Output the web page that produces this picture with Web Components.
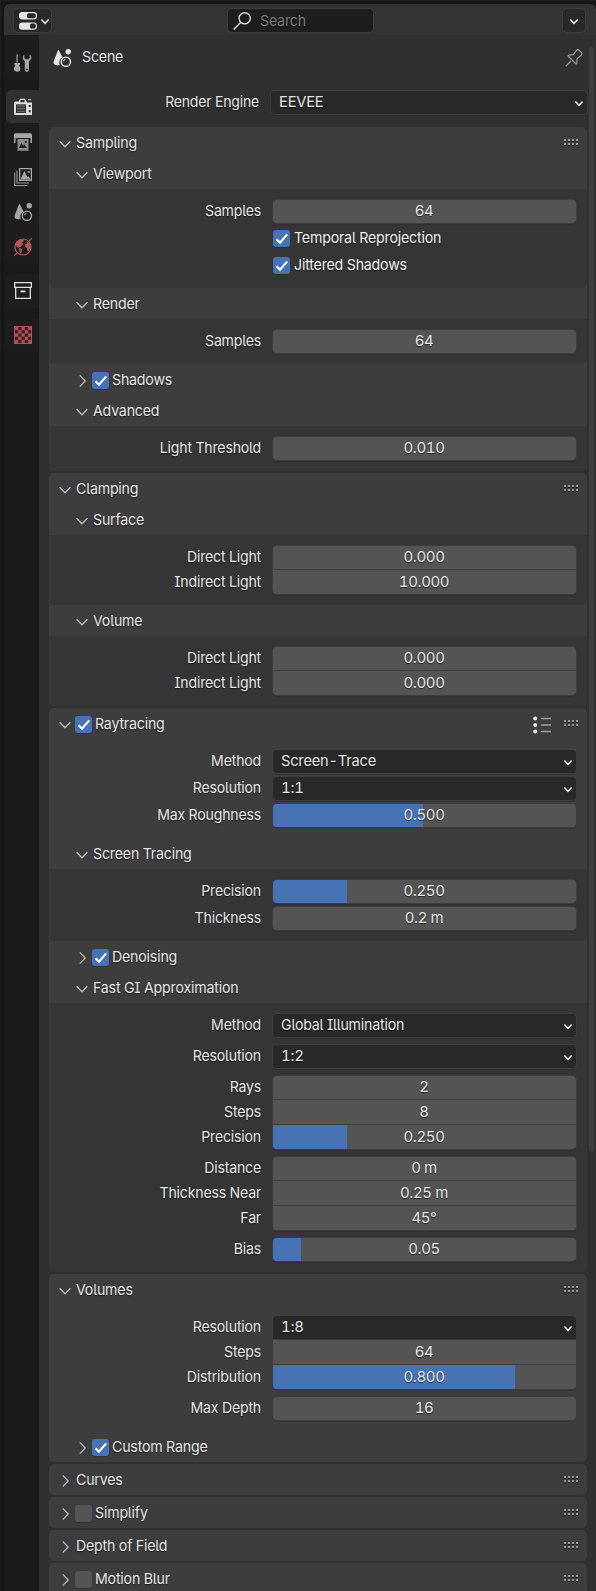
<!DOCTYPE html>
<html lang="en">
<head>
<meta charset="utf-8">
<title>Render Properties</title>
<style>
html,body{margin:0;height:1591px;overflow:hidden;background:#161616}
body{font:15px/23px Inter,"Liberation Sans",sans-serif;color:#e6e6e6;
 font-feature-settings:"cv05","cv08","tnum";text-shadow:0 1px 1px rgba(0,0,0,.6);letter-spacing:-.2px;white-space:nowrap}
</style>
</head>
<body>
<prop-editor>
  <panel-box heading="Sampling">
    <sub-panel heading="Viewport">
      <prop-row label="Samples"><num-field value="64"></num-field></prop-row>
      <prop-row><check-box checked label="Temporal Reprojection"></check-box></prop-row>
      <prop-row><check-box checked label="Jittered Shadows"></check-box></prop-row>
    </sub-panel>
    <sub-panel heading="Render">
      <prop-row label="Samples"><num-field value="64"></num-field></prop-row>
    </sub-panel>
    <sub-panel heading="Shadows" closed check="on"></sub-panel>
    <sub-panel heading="Advanced">
      <prop-row label="Light Threshold"><num-field value="0.010"></num-field></prop-row>
    </sub-panel>
  </panel-box>
  <panel-box heading="Clamping">
    <sub-panel heading="Surface">
      <prop-group>
        <prop-row label="Direct Light"><num-field value="0.000"></num-field></prop-row>
        <prop-row label="Indirect Light"><num-field value="10.000"></num-field></prop-row>
      </prop-group>
    </sub-panel>
    <sub-panel heading="Volume">
      <prop-group>
        <prop-row label="Direct Light"><num-field value="0.000"></num-field></prop-row>
        <prop-row label="Indirect Light"><num-field value="0.000"></num-field></prop-row>
      </prop-group>
    </sub-panel>
  </panel-box>
  <panel-box heading="Raytracing" check="on" presets>
    <prop-list>
      <prop-row label="Method"><drop-field value="Screen-Trace" style="--sx:.975"></drop-field></prop-row>
      <prop-row label="Resolution"><drop-field value="1:1" style="--sx:1"></drop-field></prop-row>
      <prop-row label="Max Roughness"><num-field value="0.500" fill="150"></num-field></prop-row>
    </prop-list>
    <sub-panel heading="Screen Tracing">
      <prop-row label="Precision"><num-field value="0.250" fill="74"></num-field></prop-row>
      <prop-row label="Thickness"><num-field value="0.2 m"></num-field></prop-row>
    </sub-panel>
    <sub-panel heading="Denoising" closed check="on"></sub-panel>
    <sub-panel heading="Fast GI Approximation" loose>
      <prop-row label="Method"><drop-field value="Global Illumination"></drop-field></prop-row>
      <prop-row label="Resolution"><drop-field value="1:2" style="--sx:1"></drop-field></prop-row>
      <prop-group>
        <prop-row label="Rays"><num-field value="2"></num-field></prop-row>
        <prop-row label="Steps"><num-field value="8"></num-field></prop-row>
        <prop-row label="Precision"><num-field value="0.250" fill="74"></num-field></prop-row>
      </prop-group>
      <prop-group>
        <prop-row label="Distance"><num-field value="0 m"></num-field></prop-row>
        <prop-row label="Thickness Near"><num-field value="0.25 m"></num-field></prop-row>
        <prop-row label="Far"><num-field value="45°"></num-field></prop-row>
      </prop-group>
      <prop-row label="Bias"><num-field value="0.05" fill="28"></num-field></prop-row>
    </sub-panel>
  </panel-box>
  <panel-box heading="Volumes">
    <prop-list loose>
      <prop-group>
        <prop-row label="Resolution"><drop-field value="1:8" style="--sx:1"></drop-field></prop-row>
        <prop-row label="Steps"><num-field value="64"></num-field></prop-row>
        <prop-row label="Distribution"><num-field value="0.800" fill="242"></num-field></prop-row>
      </prop-group>
      <prop-row label="Max Depth"><num-field value="16"></num-field></prop-row>
    </prop-list>
    <sub-panel heading="Custom Range" closed check="on"></sub-panel>
  </panel-box>
  <panel-box heading="Curves" closed></panel-box>
  <panel-box heading="Simplify" closed check="off"></panel-box>
  <panel-box heading="Depth of Field" closed></panel-box>
  <panel-box heading="Motion Blur" closed check="off"></panel-box>
</prop-editor>
<script>
const define = (name, css, html, init) => customElements.define(name, class extends HTMLElement {
  connectedCallback() {
    if (this.shadowRoot) return;
    const root = this.attachShadow({ mode: 'open' });
    root.innerHTML = `<style>*{box-sizing:border-box}${css}</style>` + html(this);
    if (init) init(this, root);
  }
});
const attr = (el, name) => el.getAttribute(name) || '';

const ICONS = {
  down: '<path d="M3.6 6.2 9 11.7l5.4-5.5" fill="none" stroke="#bdbdbd" stroke-width="1.3"/>',
  right: '<path d="M6.8 3.4 12.2 9l-5.4 5.6" fill="none" stroke="#bdbdbd" stroke-width="1.3"/>',
  drop: '<path d="M5.4 7.6 9 11.3l3.6-3.7" fill="none" stroke="#e6e6e6" stroke-width="1.5"/>',
  check: '<path d="M3.6 9.2 7 12.7 14.2 4.4" fill="none" stroke="#fff" stroke-width="2.1"/>',
  editor: '<rect x="0" y="0" width="18" height="7.4" rx="3.2" fill="#e6e6e6"/><rect x="8" y="1.2" width="8.6" height="5" rx="1.6" fill="#282828"/><rect x="0" y="10.4" width="18" height="7.4" rx="3.2" fill="#e6e6e6"/><rect x="11" y="11.6" width="5.7" height="5" rx="1.6" fill="#282828"/>',
  search: '<g fill="none" stroke="#dcdcdc" stroke-width="1.4"><circle cx="11.7" cy="6.3" r="5.6"/><path d="M7.6 10.4.6 17.4"/></g>',
  pin: '<path d="M.6 17.4 6 12M3 7l8 8 .9-.9V10l4.8-4.2.3-1.5L13.400.7l-1.3.2-3.900 4.8-4.300.4z" fill="none" stroke="#9a9a9a" stroke-width="1.2"/>',
  tool: '<g fill="#a6a6a6"><path d="M2.500.5h1.2v8H2.500z"/><path d="M.3 9h5.800v1.600L4.800 11.300c1.300 1 1.500 2.300 1.500 3.700 0 1.600-1 2.700-3 2.700S0 16.600 0 15c0-1.400.3-2.700 1.500-3.700L.3 10.600z"/><path d="M10.300.4c-2 1.500-2 5 .5 6.700v8.700a2 2 0 0 0 4.200 0V7.100c3-1.700 3-5.200.8-6.700v3.700l-1.300 1.200h-2.700L10.300 4.100z"/></g><circle cx="12.900" cy="15.500" r="1" fill="#222"/>',
  render: '<path d="M1.500 3.500h3.200L6 .7h5l1.300 2.800h.7v13.500H1.500A1.500 1.500 0 0 1 0 15.500V5a1.500 1.500 0 0 1 1.500-1.500z" fill="#e0e0e0"/><path d="M6.500 2h4v2.300h-4z" fill="#303030"/><path d="M12 4.500h6V17h-6z" fill="#e0e0e0"/><path d="M14 1h3.200v1.300H14z" fill="#aaa"/><path d="M2 6.300h10v8.700H2z" fill="#303030"/><path d="M2.800 8h8.400M2.800 10.600h8.400M2.800 13.300h8.400" stroke="#777" stroke-width="1"/><path d="M14.700 7h2v2h-2zM14.700 12.300h2v2h-2z" fill="#303030"/>',
  output: '<path d="M1.500.3h15A1.500 1.500 0 0 1 18 1.800V10h-1.500V5h-15v5H0V1.800A1.500 1.500 0 0 1 1.500.3z" fill="#a6a6a6"/><path fill-rule="evenodd" d="M3.500 6h11v11.700h-11zM5 15h8l-2.500-3.500-1.400 1.300L7.600 9.500z" fill="#8c8c8c"/><circle cx="11.700" cy="9" r="1.100" fill="#222"/>',
  layers: '<path d="M.7 4.500v13h12.500M3 2.600v12.400h12" fill="none" stroke="#999" stroke-width="1.100"/><path fill-rule="evenodd" d="M5 0h13v13H5zM6.300 1.300v10.400h10.400V1.300z" fill="#a6a6a6"/><path d="M6.500 11.500 10.300 3l3.300 6.300 1-1 2 3.200z" fill="#a6a6a6"/><path d="M13.500 3.200h2.200v1.600h-2.200z" fill="#a6a6a6"/>',
  scene: '<g fill="currentColor"><path d="M5.300.5 1 11.500C-.6 15.300 2 16.500 6.800 16.300 5.500 13 7 9.300 9.600 8.500z"/><circle cx="15.200" cy="2.800" r="2.700"/></g><circle cx="12.900" cy="12.700" r="4.600" fill="none" stroke="currentColor" stroke-width="1.400"/><path d="M10.500 12.300a2.300 2.300 0 0 1 2-2" fill="none" stroke="currentColor" stroke-width="1"/>',
  world: '<circle cx="9" cy="9" r="8" fill="none" stroke="#b8545c" stroke-width="1.200"/><path d="M1.500 5.500C4 1.500 8 .800 10 1.500l-.5 2-2 .8 1.800 1.200-2 3-2.300 1 3.300 2.200-1.300 4.300-1.500-2L5.200 10 2.800 9zM12 3.300l4 2.200 1 3.500-2 4-1.700-.5-.5-2.700-2-1.300.2-2 2-1z" fill="#b8545c"/><path d="M.3 17.700 3 15M15 3 17.700.3" stroke="#b8545c" stroke-width="1.200"/>',
  object: '<path d="M.7.700h16.600v4.600H.700zM1.700 5.300h14.600v11H1.700z" fill="none" stroke="#e0e0e0" stroke-width="1.300"/><path d="M6.500 8.500h5v1.800h-5z" fill="#e0e0e0"/>',
  texture: '<path d="M0 0h18v18H0z" fill="#b05058"/><path fill="#3a2022" d="M4.300 1h3.300v3.200H4.300zM10.800 1h3.300v3.200h-3.300zM1 4.300h3.300v3.300H1zM7.600 4.300h3.200v3.300H7.600zM14.100 4.300H17v3.300h-2.900zM4.300 7.600h3.300v3.200H4.300zM10.800 7.600h3.300v3.200h-3.300zM1 10.800h3.300v3.300H1zM7.600 10.800h3.200v3.300H7.600zM14.100 10.800H17v3.300h-2.900zM4.300 14.100h3.300V17H4.300zM10.800 14.100h3.300V17h-3.300z"/>',
  presets: '<g fill="#e6e6e6"><circle cx="2.200" cy="2.400" r="2"/><circle cx="2.200" cy="9" r="2"/><circle cx="2.200" cy="15.600" r="2"/></g><path d="M8 2.500h10M8 9h10M8 15.500h10" stroke="#a0a0a0" stroke-width="1.300"/>',
  grip: '<path d="M2 6h2v2H2zM6 6h2v2H6zM10 6h2v2h-2zM14 6h2v2h-2zM2 10h2v2H2zM6 10h2v2H6zM10 10h2v2h-2zM14 10h2v2h-2z" fill="#111"/><path d="M2 5h2v2H2zM6 5h2v2H6zM10 5h2v2h-2zM14 5h2v2h-2zM2 9h2v2H2zM6 9h2v2H6zM10 9h2v2h-2zM14 9h2v2h-2z" fill="#9c9c9c"/>'
};
define('ui-icon', ':host{display:block;width:18px;height:18px;flex:none}svg{display:block;overflow:visible}',
  el => `<svg width="18" height="18" viewBox="0 0 18 18">${ICONS[attr(el, 'name')]}</svg>`);

define('check-mark', `:host{display:block;flex:none;width:17px;height:17px;border-radius:3px;background:#545454;box-shadow:0 1px 0 rgba(0,0,0,.18)}
  :host([checked]){background:#4772b3}ui-icon{width:17px;height:17px}`,
  el => el.hasAttribute('checked') ? '<ui-icon name="check"></ui-icon>' : '');

define('check-box', ':host{display:flex;align-items:center;height:23px;gap:4px;color:#f2f2f2}span{line-height:22px;height:23px;transform:scaleX(.945);transform-origin:0 0}',
  el => `<check-mark ${el.hasAttribute('checked') ? 'checked' : ''}></check-mark><span>${attr(el, 'label')}</span>`);

define('num-field', `:host{display:block;height:var(--h,23px);border-radius:var(--r,4px);text-align:center;line-height:var(--lh,22px);letter-spacing:-.4px;
  background:linear-gradient(#4772b3,#4772b3) 0 0/var(--fill,0px) 100% no-repeat,#545454;box-shadow:var(--edge,0 0 0 1px #3d3d3d,0 2px 0 rgba(0,0,0,.12))}
  span{margin-right:1px}`,
  el => `<span>${attr(el, 'value')}</span>`,
  el => { if (el.hasAttribute('fill')) el.style.setProperty('--fill', attr(el, 'fill') + 'px'); });

define('drop-field', `:host{display:flex;justify-content:space-between;height:var(--h,23px);border-radius:var(--r,4px);line-height:var(--lh,22px);padding-left:8px;
  background:#282828;box-shadow:var(--edge,0 0 0 1px #3d3d3d,0 2px 0 rgba(0,0,0,.12))}ui-icon{margin:3px -1px 0 0}
  span{transform:scaleX(var(--sx,.945));transform-origin:0 0}`,
  el => `<span>${attr(el, 'value')}</span><ui-icon name="drop"></ui-icon>`);

define('prop-row', `:host{display:grid;grid-template-columns:212px 303px;column-gap:12px;align-items:end}
  label{text-align:right;height:23px;line-height:22px;transform:scaleX(.94);transform-origin:100% 0}`,
  el => `<label>${attr(el, 'label')}</label><slot></slot>`);

define('prop-group', `:host{display:flex;flex-direction:column;gap:1px}
  ::slotted(prop-row){--h:24px;--r:0;--lh:24px;--edge:0 0 0 1px #3d3d3d}
  ::slotted(:first-child){--h:23px;--r:4px 4px 0 0;--lh:22px}
  ::slotted(:last-child){--r:0 0 4px 4px;--edge:0 0 0 1px #3d3d3d,0 2px 0 rgba(0,0,0,.12)}`,
  () => '<slot></slot>');

define('prop-list', ':host{display:flex;flex-direction:column;gap:4px;padding:11px 11px 11px 0}:host([loose]){gap:8px}',
  () => '<slot></slot>');

const heading = el => {
  const check = attr(el, 'check');
  return `<header><ui-icon name="${el.hasAttribute('closed') ? 'right' : 'down'}"></ui-icon>
  ${check ? `<check-mark ${check === 'on' ? 'checked' : ''}></check-mark>` : ''}<span class="t">${attr(el, 'heading')}</span>
  ${el.hasAttribute('presets') ? '<ui-icon class="presets" name="presets"></ui-icon>' : ''}
  ${el.localName === 'panel-box' ? '<ui-icon class="grip" name="grip"></ui-icon>' : ''}</header>`;
};
const headCss = `header{display:flex;align-items:center;height:31px}header .t{flex:1;line-height:31px;height:31px;margin-left:2px;transform:scaleX(.945);transform-origin:0 0}
  check-mark{margin:2px 1px 0 1px}header>ui-icon:first-child{margin:2px .5px 0 -.5px}`;

define('panel-box', `:host{display:block;background:#3d3d3d;border-radius:5px;overflow:hidden;flex:none}${headCss}
  header{padding:0 7px 0 7px}.presets{margin:3px 11px 0 0}.grip{margin-top:0}`,
  el => heading(el) + (el.hasAttribute('closed') ? '' : '<slot></slot>'));

define('sub-panel', `:host{display:block}${headCss}header{padding:0 7px 0 24px}prop-list{background:#353535;border-radius:0 0 5px 5px}`,
  el => heading(el) + (el.hasAttribute('closed') ? '' : `<prop-list ${el.hasAttribute('loose') ? 'loose' : ''}><slot></slot></prop-list>`));

define('tab-strip', `:host{display:flex;flex-direction:column;gap:10px;width:35px;background:#1a1a1a;padding-left:2px}
  .g{background:#1d1d1d;border-radius:5px 0 0 5px;display:flex;flex-direction:column;gap:2px;padding-bottom:1px;color:#a6a6a6}
  .g i{display:flex;height:33px;align-items:center;padding-left:8px;border-radius:5px 0 0 5px}
  .tool{padding:11px 0 1px;border-radius:0 0 0 5px}.on{background:#303030}`,
  () => [['tool'], ['render', 'output', 'layers', 'scene', 'world'], ['object'], ['texture']].map(g =>
    `<div class="g ${g[0]}">${g.map(n => `<i class="${n === 'render' ? 'on' : ''}"><ui-icon name="${n}"></ui-icon></i>`).join('')}</div>`).join(''));

define('editor-header', `:host{display:flex;height:31px;background:#333;border-radius:6px 6px 0 0;padding:5px 11px 0 10px;align-items:flex-start}
  div{height:23px;border-radius:4px;background:#282828;box-shadow:0 0 0 1px #3d3d3d;display:flex}
  .type{width:37px;padding:3px 0 0 5px}.type ui-icon+ui-icon{margin-left:-1px}
  .search{width:145px;margin-left:177px;background:#1d1d1d;color:#7a7a7a;line-height:23px;padding-left:5px;gap:9px}.search ui-icon{margin-top:3px}
  .search span{transform:scaleX(.945);transform-origin:0 0}
  .opt{width:22px;margin-left:auto;padding:3px 0 0 1.5px}`,
  () => `<div class="type"><ui-icon name="editor"></ui-icon><ui-icon name="drop"></ui-icon></div>
  <div class="search"><ui-icon name="search"></ui-icon><span>Search</span></div>
  <div class="opt"><ui-icon name="drop"></ui-icon></div>`);

define('prop-editor', `:host{display:block;box-sizing:border-box;height:1591px;border:solid #1f1f1f;border-width:1px 0 0 1px;padding:3px 0 0 3px;overflow:hidden}
  main{display:grid;grid-template-columns:35px 1fr 9px;background:#303030;height:1556px}
  .col{padding-left:10px;display:flex;flex-direction:column;gap:2px;min-width:0}
  .crumb{display:flex;height:23px;margin-top:10px;padding:0 4px 0 4px;line-height:23px}.crumb ui-icon{margin-top:4px}.crumb span{flex:1;margin-left:11px;transform:scaleX(.945);transform-origin:0 0}
  .engine{display:grid;grid-template-columns:210px 316px;column-gap:12px;margin:21px 0 11px;height:23px;--sx:.98}
  .engine label{text-align:right;line-height:22px;transform:scaleX(.935);transform-origin:100% 0}
  .bar{width:5px;height:1105px;margin:12px 0 0 2px;background:#3d3d3d;border-radius:3px}`,
  () => `<editor-header></editor-header><main><tab-strip></tab-strip>
  <div class="col"><div class="crumb"><ui-icon name="scene"></ui-icon><span>Scene</span><ui-icon name="pin"></ui-icon></div>
  <div class="engine"><label>Render Engine</label><drop-field value="EEVEE"></drop-field></div><slot></slot></div>
  <div class="bar"></div></main>`);
</script>
</body>
</html>
